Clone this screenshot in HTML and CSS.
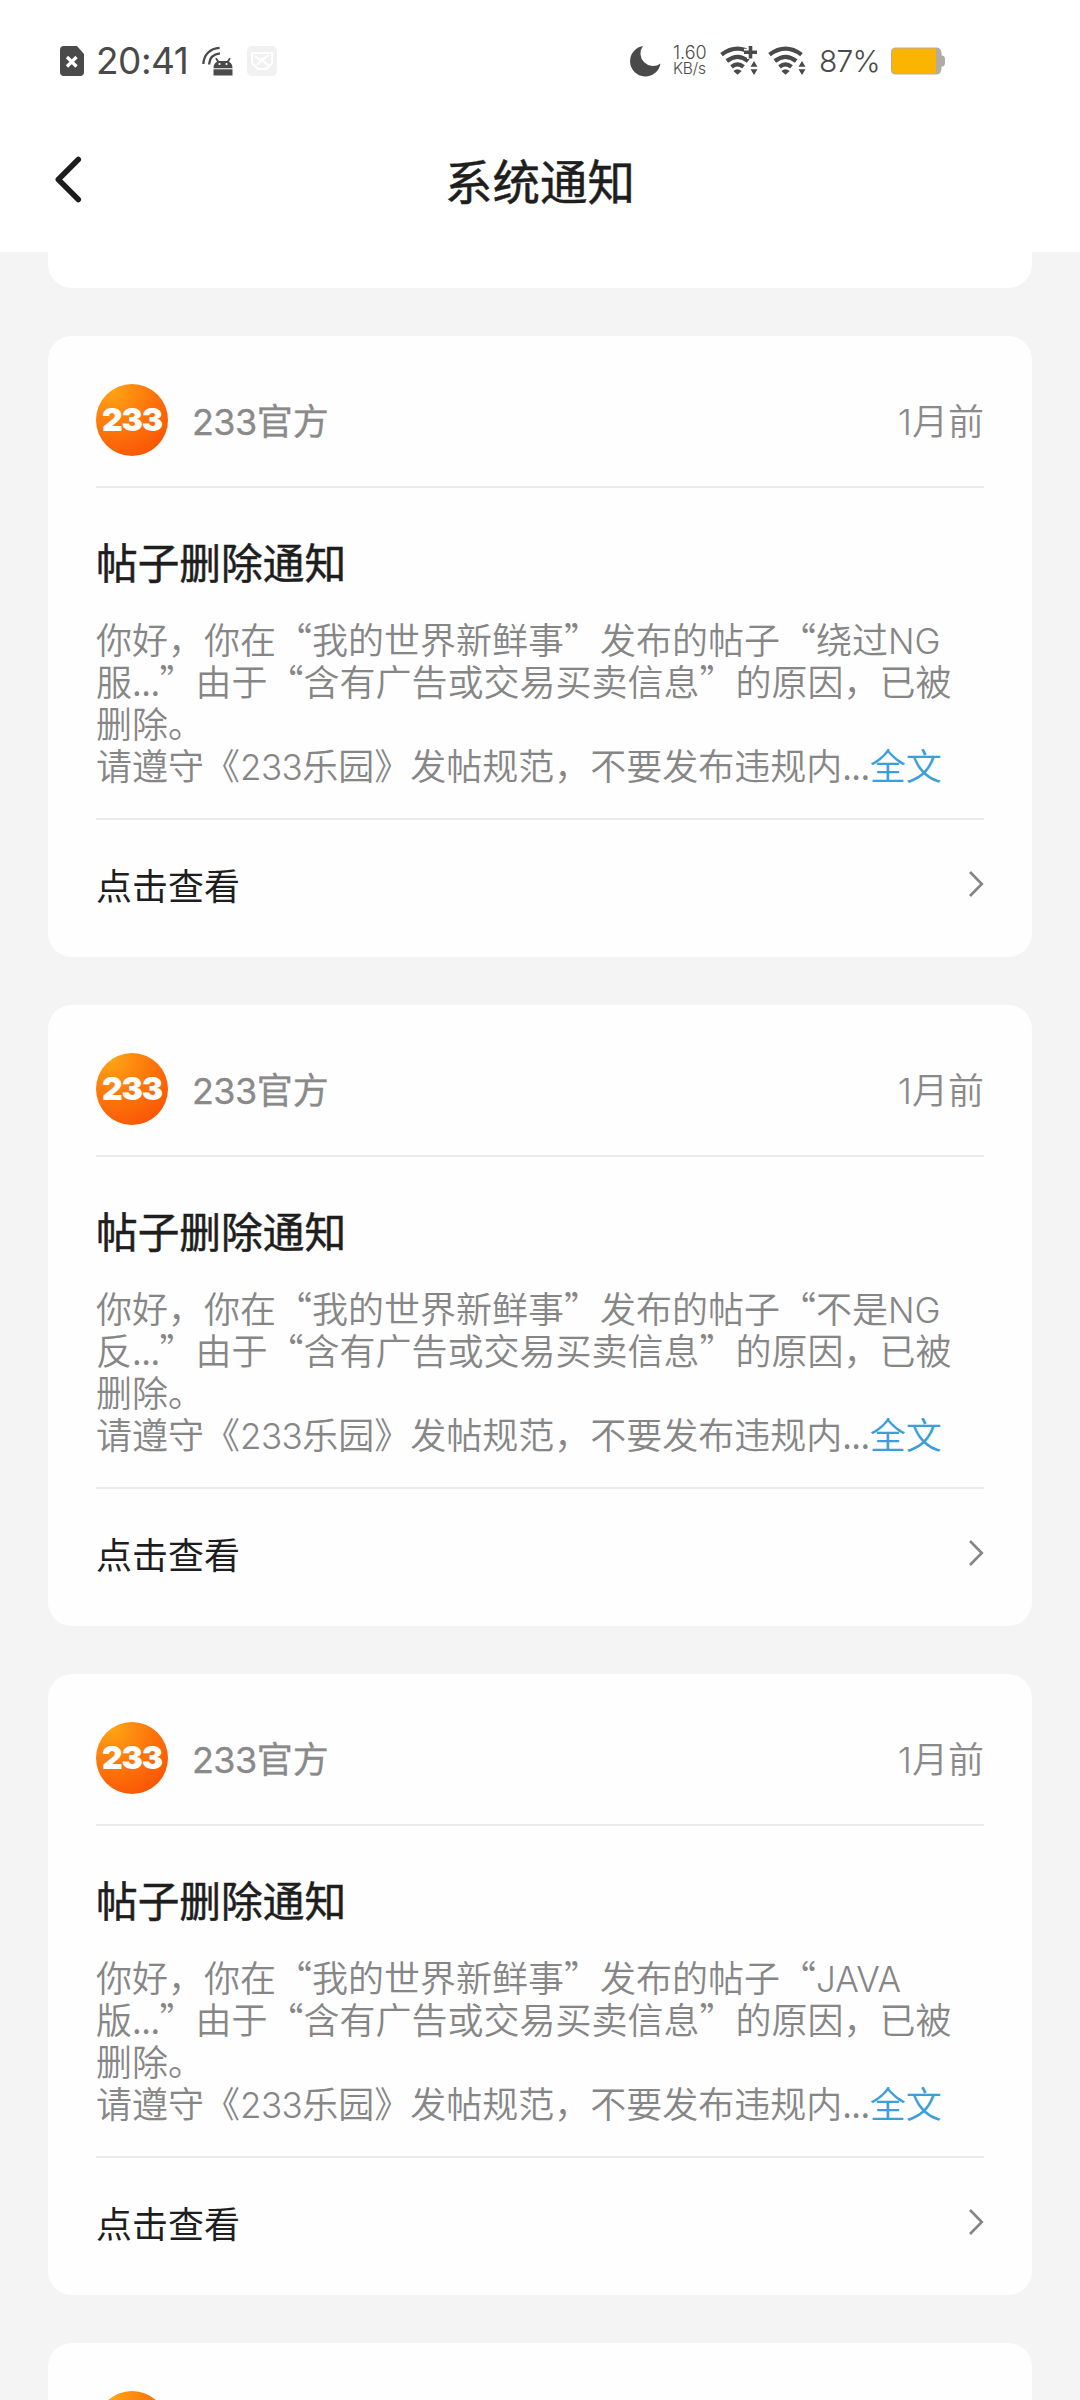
FILE: index.html
```html
<!DOCTYPE html>
<html lang="zh-CN">
<head>
<meta charset="utf-8">
<title>系统通知</title>
<link rel="stylesheet" href="styles.css">
</head>
<body>
<svg class="defs" width="0" height="0" aria-hidden="true">
  <defs>
    <symbol id="chevron" viewBox="0 0 16 28"><path d="M2 2L13.800 14L2 26" fill="none" stroke="#858585" stroke-width="2.6"/></symbol>
    <symbol id="wifi" viewBox="0 0 38 30">
      <g fill="none" stroke="#4a4a4a" stroke-width="4.2">
        <path d="M1.5 8.6Q17.500 -3.400 33.5 8.600"/>
        <path d="M6.800 15Q17.500 6.600 28.200 15"/>
        <path d="M11.500 20.900Q17.500 15.900 23.500 20.900"/>
      </g>
      <path d="M13.300 25Q17.500 21.600 21.700 25L17.500 28.800Z" fill="#4a4a4a"/>
      <path d="M30.500 20.800L34 15L37.500 20.800ZM30.500 23.200L34 29L37.500 23.200Z" fill="#4a4a4a" stroke="#fff" stroke-width="4" paint-order="stroke"/>
    </symbol>
  </defs>
</svg>
<div class="screen">
  <header class="top">
    <div class="status">
      <div class="status-left">
        <svg class="sim" width="24" height="30" viewBox="0 0 24 30"><path d="M4 0H17L24 8V26Q24 30 20 30H4Q0 30 0 26V4Q0 0 4 0Z" fill="#4a4a4a"/><path d="M7 11L16.500 20.500M16.500 11L7 20.500" stroke="#fff" stroke-width="3.200"/></svg>
        <span class="clock">20:41</span>
        <svg class="cast" width="31" height="30" viewBox="0 0 31 30">
          <g fill="none" stroke="#4a4a4a" stroke-width="2.300"><path d="M1.400 18C1.600 9 8 2.300 17.600 1.800"/><path d="M7 18.500C7.500 11.500 11.500 8 18 7.400"/></g>
          <path d="M11.500 22.300C11.500 18.700 13 16.800 15 15.800L13.200 12.500L14.600 11.800L17 14.900H25L27.300 11.800L28.700 12.500L27 15.800C29 16.800 30.500 18.700 30.500 22.300Z" fill="#4a4a4a"/>
          <path d="M11.500 23.300H30.500V29.500H11.500Z" fill="#4a4a4a"/><circle cx="17.500" cy="18" r="1.100" fill="#fff"/><circle cx="24.500" cy="18" r="1.100" fill="#fff"/>
        </svg>
        <svg class="ghost" width="30" height="30" viewBox="0 0 30 30"><rect width="30" height="30" rx="5" fill="#f1f1f1"/><path d="M5 7H25V17M5 7V17L11 23H19L25 17M8 10L13 14L18 12L22 9M10 19L15 14L21 19" fill="none" stroke="#fff" stroke-width="2"/></svg>
      </div>
      <div class="status-right">
        <svg class="moon" width="31" height="31" viewBox="0 0 31 31"><path d="M13 0A15.300 15.300 0 1 0 30.500 17.500A12.500 12.500 0 0 1 13 0Z" fill="#4a4a4a"/></svg>
        <span class="speed"><span>1.60</span><span class="unit">KB/s</span></span>
        <svg class="wifi-plus" width="38" height="30" viewBox="0 0 38 30"><use href="#wifi" width="38" height="30"/><path d="M30.500 0V13M24 6.300H37" stroke="#fff" stroke-width="7"/><path d="M30.500 0V12.500M24 6.300H37" stroke="#4a4a4a" stroke-width="3.600"/></svg>
        <svg class="wifi" width="38" height="30"><use href="#wifi" width="38" height="30"/></svg>
        <span class="percent">87%</span>
        <svg class="battery" width="54" height="28" viewBox="0 0 54 28"><path d="M5 .5H45Q50 .5 50.500 6V8.500H51.500Q54 9 54 12V16Q54 19 51.500 19.500H50.500V22Q50 27.500 45 27.500H5Q0 27.500 0 22.500V5.500Q0 .5 5 .5Z" fill="#b1aba5"/><path d="M5 1.500H45V26.500H5Q1 26.500 1 22.500V5.500Q1 1.500 5 1.500Z" fill="#fbb500"/></svg>
      </div>
    </div>
    <div class="nav">
      <svg class="back" width="28" height="48" viewBox="0 0 28 48"><path d="M23.300 3.500L3.300 23.500L23.300 43.500" fill="none" stroke="#1c1c1c" stroke-width="5.500" stroke-linecap="round" stroke-linejoin="round"/></svg>
      <h1 class="heading">系统通知</h1>
    </div>
  </header>
  <main class="feed">
    <div class="card-tail"></div>

    <article class="card">
      <div class="sender"><span class="avatar"><b>233</b></span><span class="name"><span class="num">233</span>官方</span><time class="time"><span class="one">1</span>月前</time></div>
      <h2 class="title">帖子删除通知</h2>
      <p class="body">你好，你在“我的世界新鲜事”发布的帖子“绕过<span class="latin">NG</span><br>服<span class="dots">...</span>”由于“含有广告或交易买卖信息”的原因，已被<br>删除。<br>请遵守《<span class="latin digits">233</span>乐园》发帖规范，不要发布违规内<span class="dots">...</span><a class="more">全文</a></p>
      <div class="action"><span>点击查看</span><svg width="16" height="28"><use href="#chevron" width="16" height="28"/></svg></div>
    </article>

    <article class="card">
      <div class="sender"><span class="avatar"><b>233</b></span><span class="name"><span class="num">233</span>官方</span><time class="time"><span class="one">1</span>月前</time></div>
      <h2 class="title">帖子删除通知</h2>
      <p class="body">你好，你在“我的世界新鲜事”发布的帖子“不是<span class="latin">NG</span><br>反<span class="dots">...</span>”由于“含有广告或交易买卖信息”的原因，已被<br>删除。<br>请遵守《<span class="latin digits">233</span>乐园》发帖规范，不要发布违规内<span class="dots">...</span><a class="more">全文</a></p>
      <div class="action"><span>点击查看</span><svg width="16" height="28"><use href="#chevron" width="16" height="28"/></svg></div>
    </article>

    <article class="card">
      <div class="sender"><span class="avatar"><b>233</b></span><span class="name"><span class="num">233</span>官方</span><time class="time"><span class="one">1</span>月前</time></div>
      <h2 class="title">帖子删除通知</h2>
      <p class="body">你好，你在“我的世界新鲜事”发布的帖子“<span class="latin">JAVA</span><br>版<span class="dots">...</span>”由于“含有广告或交易买卖信息”的原因，已被<br>删除。<br>请遵守《<span class="latin digits">233</span>乐园》发帖规范，不要发布违规内<span class="dots">...</span><a class="more">全文</a></p>
      <div class="action"><span>点击查看</span><svg width="16" height="28"><use href="#chevron" width="16" height="28"/></svg></div>
    </article>

    <article class="card card-peek">
      <div class="sender"><span class="avatar"></span></div>
    </article>
  </main>
</div>
</body>
</html>
```

FILE: styles.css
```css
* { box-sizing: border-box; }
body {
  margin: 0;
  background: #f5f4f5;
  font-family: "Noto Sans CJK SC", sans-serif;
  color: #1e1e1e;
}
.defs { display: block; }
.screen {
  display: flex;
  flex-direction: column;
  height: 2400px;
  overflow: hidden;
}
svg { display: block; flex: none; }

/* Status bar and navigation */
.top { flex: none; height: 252px; background: #fff; }
.status {
  display: flex;
  justify-content: space-between;
  height: 122px;
  padding: 0 135px 0 60px;
  color: #4a4a4a;
}
.status-left, .status-right { display: flex; align-items: center; }
.clock {
  width: 94px;
  margin: 0 12px 0 12px;
  font: 400 37px/40px Inter, sans-serif;
  letter-spacing: -0.5px;
  white-space: nowrap;
}
.ghost { margin-left: 14px; }
.speed {
  display: flex;
  flex-direction: column;
  width: 35px;
  margin: 0 12px 0 12px;
  font: 350 18px/16px Inter, sans-serif;
  white-space: nowrap;
}
.unit { font-size: 15.500px; letter-spacing: -0.2px; }
.wifi { margin-left: 10px; }
.percent {
  width: 61px;
  margin: 0 11px 0 13px;
  font: 300 30px/36px Inter, sans-serif;
  letter-spacing: -0.8px;
  white-space: nowrap;
}
.nav {
  display: grid;
  grid-template-columns: 84px 1fr 84px;
  align-items: center;
  height: 116px;
}
.back { margin: 0 0 0 55px; }
.heading {
  margin: 0;
  font-size: 47.500px;
  line-height: 72px;
  font-weight: 400;
  text-align: center;
  -webkit-text-stroke: 0.5px currentColor;
}

/* Notification feed */
.feed {
  display: flex;
  flex-direction: column;
  gap: 48px;
  padding: 0 48px;
}
.card-tail {
  height: 36px;
  background: #fff;
  border-radius: 0 0 24px 24px;
}
.card {
  flex: none;
  height: 621px;
  padding: 0 48px;
  background: #fefefe;
  border-radius: 24px;
}
.sender {
  display: flex;
  align-items: center;
  height: 152px;
  padding-top: 18px;
  border-bottom: 2px solid #ebebeb;
  color: #8a8a8a;
  font-size: 36px;
  line-height: 50px;
}
.avatar {
  display: flex;
  align-items: center;
  justify-content: center;
  width: 72px;
  height: 72px;
  border-radius: 50%;
  background: radial-gradient(circle at 22% 8%, #ffa514 0%, #fc7a0c 42%, #fb5405 85%);
  color: #fff;
  font: 900 32px/72px Inter, sans-serif;
  letter-spacing: -1.2px;
}
.name {
  margin-left: 24px;
  -webkit-text-stroke: 0.3px currentColor;
}
.num { font-family: Inter, sans-serif; letter-spacing: -0.6px; }
.time { margin-left: auto; font-weight: 350; }
.one { font-family: Inter, sans-serif; font-weight: 300; }
.title {
  margin: 41px 0 0;
  font-size: 41.700px;
  line-height: 64px;
  font-weight: 400;
  -webkit-text-stroke: 0.5px currentColor;
}
.body {
  height: 227px;
  margin: 0;
  padding-top: 24px;
  border-bottom: 2px solid #ebebeb;
  color: #868686;
  font-size: 36px;
  line-height: 42px;
  font-weight: 350;
  white-space: nowrap;
}
.latin {
  font-family: Inter, sans-serif;
  font-size: 35px;
  font-weight: 300;
  line-height: 1;
}
.digits { letter-spacing: -0.6px; }
.dots { letter-spacing: -0.500px; }
.more { color: #3b9fd8; }
.action {
  display: flex;
  align-items: center;
  justify-content: space-between;
  height: 128px;
  font-size: 36px;
  font-weight: 400;
}
```
